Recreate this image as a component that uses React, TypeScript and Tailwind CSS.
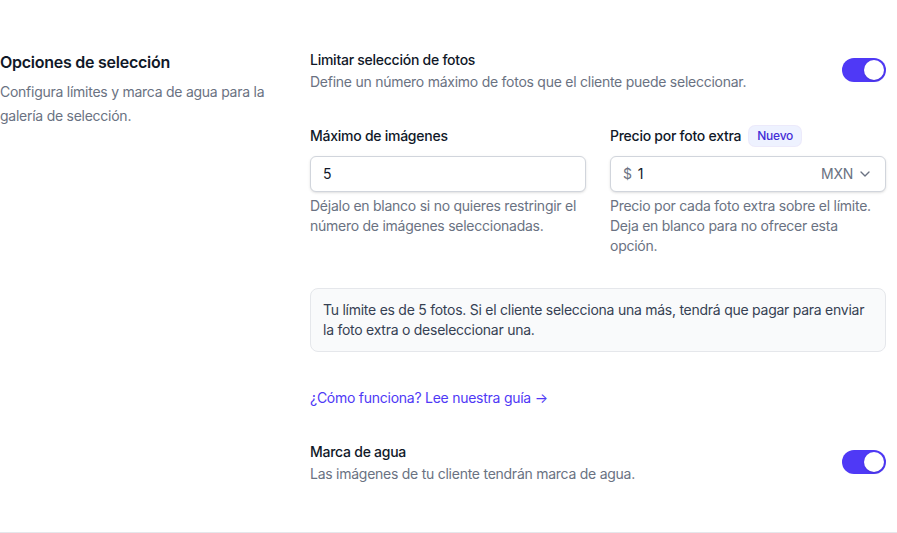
import { ChevronDown } from "lucide-react";

function Toggle() {
  return (
    <button
      type="button"
      className="relative inline-flex h-6 w-11 shrink-0 items-center rounded-full bg-indigo-600 p-0.5"
    >
      <span className="h-5 w-5 translate-x-5 rounded-full bg-white shadow" />
    </button>
  );
}

export default function App() {
  return (
    <div className="min-h-screen bg-white font-['Inter',sans-serif] tracking-[-0.016em] antialiased">
      <div className="flex gap-6 border-b border-gray-200 pt-12 pb-12">
        <div className="w-[286px] shrink-0">
          <h2 className="text-base/7 font-semibold text-gray-900">Opciones de selección</h2>
          <p className="mt-1 text-sm/6 text-gray-500">
            Configura límites y marca de agua para la galería de selección.
          </p>
        </div>

        <div className="w-[576px]">
          <div className="flex items-center justify-between">
            <div>
              <p className="text-sm/6 font-medium text-gray-900">Limitar selección de fotos</p>
              <p className="text-sm/5 text-gray-500">
                Define un número máximo de fotos que el cliente puede seleccionar.
              </p>
            </div>
            <Toggle />
          </div>

          <div className="mt-8 grid grid-cols-2 gap-6">
            <div>
              <label className="block text-sm/6 font-medium text-gray-900">Máximo de imágenes</label>
              <div className="mt-2 flex h-9 items-center rounded-md border border-gray-300 bg-white px-3 text-sm text-gray-900 shadow-sm">
                5
              </div>
              <p className="mt-1 text-sm/5 text-gray-500">
                Déjalo en blanco si no quieres restringir el número de imágenes seleccionadas.
              </p>
            </div>
            <div>
              <div className="flex items-center gap-2">
                <label className="text-sm/6 font-medium text-gray-900">Precio por foto extra</label>
                <span className="rounded-md bg-indigo-50 px-2 py-0.5 text-xs font-medium text-indigo-700 ring-1 ring-indigo-700/10">
                  Nuevo
                </span>
              </div>
              <div className="mt-2 flex h-9 items-center rounded-md border border-gray-300 bg-white px-3 text-sm shadow-sm">
                <span className="text-gray-500">$</span>
                <span className="ml-1.5 flex-1 text-gray-900">1</span>
                <span className="text-gray-500">MXN</span>
                <ChevronDown className="ml-1 h-4 w-4 text-gray-500" strokeWidth={2} />
              </div>
              <p className="mt-1 text-sm/5 text-gray-500">
                Precio por cada foto extra sobre el límite. Deja en blanco para no ofrecer esta opción.
              </p>
            </div>
          </div>

          <div className="mt-8 rounded-lg border border-gray-200 bg-gray-50 px-3 py-[11px] text-sm/5 text-gray-700">
            Tu límite es de 5 fotos. Si el cliente selecciona una más, tendrá que pagar para enviar la foto extra o deseleccionar una.
          </div>

          <a href="#" className="mt-[34px] block text-sm/6 text-indigo-600">
            ¿Cómo funciona? Lee nuestra guía →
          </a>

          <div className="mt-[30px] flex items-center justify-between">
            <div>
              <p className="text-sm/6 font-medium text-gray-900">Marca de agua</p>
              <p className="text-sm/5 text-gray-500">
                Las imágenes de tu cliente tendrán marca de agua.
              </p>
            </div>
            <Toggle />
          </div>
        </div>
      </div>
    </div>
  );
}
